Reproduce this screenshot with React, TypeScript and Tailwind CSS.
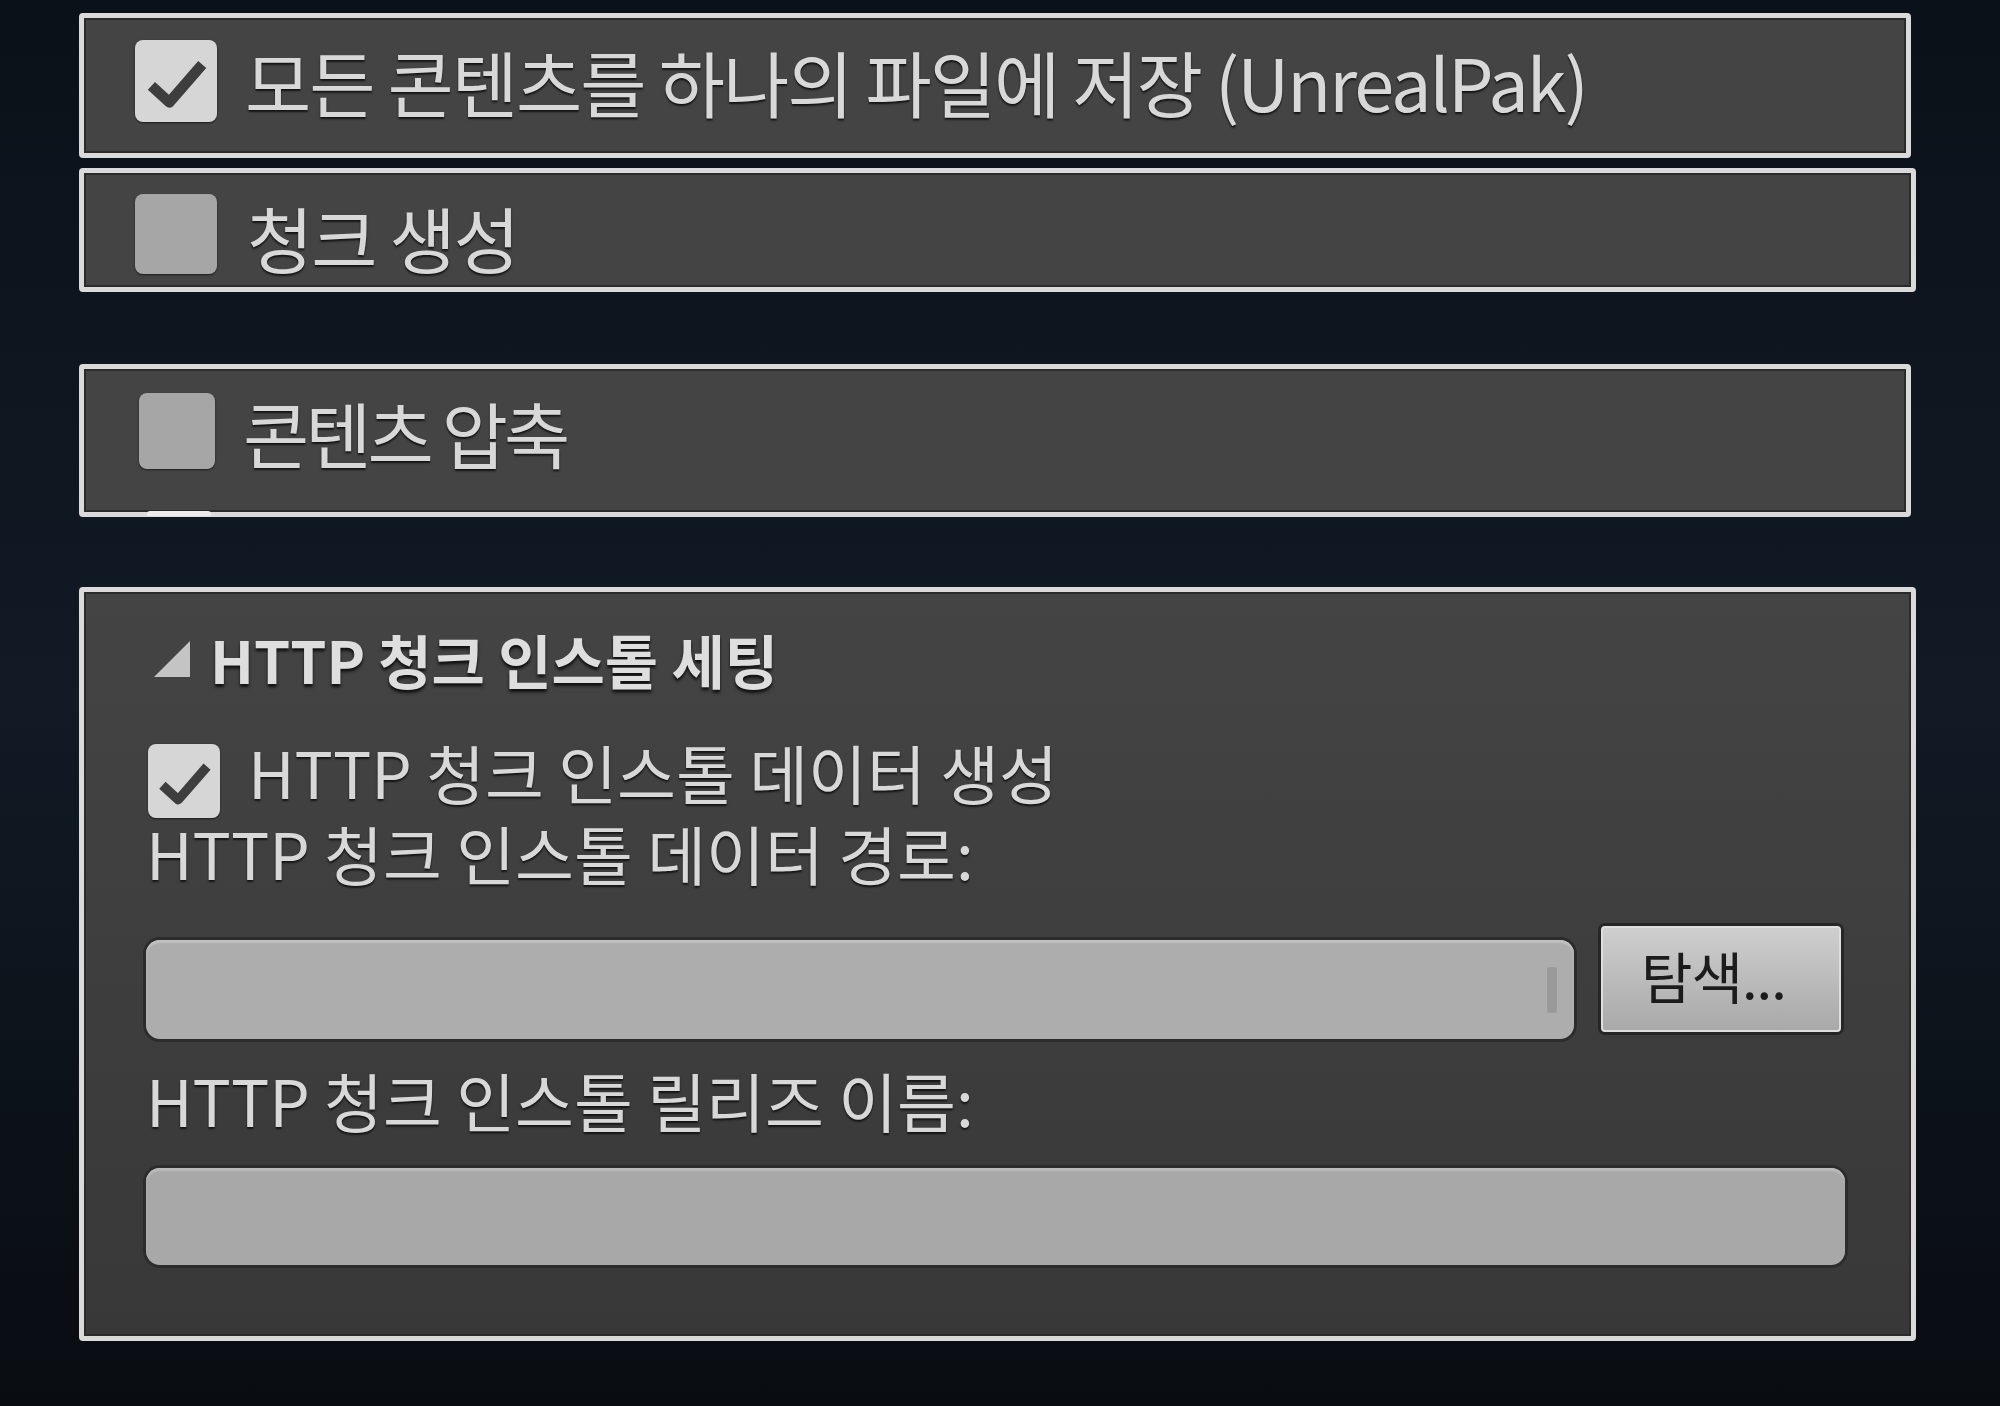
import React from "react";

const font = "font-['Noto_Sans_CJK_KR','Noto_Sans',sans-serif]";
const shadowText = "[text-shadow:0_2px_2px_#141414]";

function Check({ checked, className }: { checked?: boolean; className: string }) {
  return (
    <div
      className={`shrink-0 rounded-[8px] shadow-[0_1px_2px_#1c1c1c] ${
        checked ? "bg-[#d6d6d6]" : "bg-[#a6a6a6]"
      } ${className}`}
    >
      {checked && (
        <svg viewBox="0 0 100 100" className="w-full h-full">
          <polyline
            points="20,56 42,76 82,30"
            fill="none"
            stroke="#3e3e3e"
            strokeWidth="13"
            strokeLinejoin="round"
          />
        </svg>
      )}
    </div>
  );
}

function Panel({
  className,
  children,
}: {
  className: string;
  children: React.ReactNode;
}) {
  return (
    <div
      className={`relative border-[5px] border-[#dadada] rounded-[4px] bg-[#444444] shadow-[inset_0_0_0_2px_#2b2b2b] ${className}`}
    >
      {children}
    </div>
  );
}

export default function App() {
  return (
    <div
      className={`w-[2000px] h-[1406px] overflow-hidden bg-gradient-to-b from-[#0b1119] via-[#111a25] to-[#090c11] pl-[79px] pt-[13px] flex flex-col ${font}`}
    >
      <Panel className="w-[1832px] h-[145px] flex items-start pl-[51px] pt-[22px]">
        <Check checked className="w-[82px] h-[82px]" />
        <span
          className={`ml-[28px] mt-[-4px] text-[72px] leading-[90px] tracking-[-2px] text-[#d8d8d8] ${shadowText}`}
        >
          모든 콘텐츠를 하나의 파일에 저장 (UnrealPak)
        </span>
      </Panel>

      <Panel className="mt-[10px] w-[1837px] h-[124px] flex items-start pl-[51px] pt-[21px]">
        <Check className="w-[82px] h-[80px]" />
        <span
          className={`ml-[30px] mt-[-2px] text-[72px] leading-[90px] tracking-[-2px] text-[#d8d8d8] ${shadowText}`}
        >
          청크 생성
        </span>
      </Panel>

      <Panel className="mt-[72px] w-[1832px] h-[153px] flex items-start pl-[55px] pt-[24px]">
        <Check className="w-[76px] h-[76px]" />
        <span
          className={`ml-[28px] mt-[-6px] text-[72px] leading-[90px] tracking-[-4px] text-[#d8d8d8] ${shadowText}`}
        >
          콘텐츠 압축
        </span>
        <div className="absolute left-[63px] bottom-[-4px] w-[64px] h-[5px] rounded-t-[3px] bg-[#ececec]" />
      </Panel>

      <Panel className="mt-[70px] w-[1837px] h-[754px] bg-gradient-to-b from-[#444444] to-[#383838] pl-[62px] pr-[65px] flex flex-col">
        <div className="mt-[32px] flex items-center h-[70px]">
          <svg viewBox="0 0 40 40" className="ml-[7px] w-[38px] h-[36px] shrink-0">
            <polygon points="0,40 40,0 40,40" fill="#c4c4c4" />
          </svg>
          <span
            className={`ml-[19px] text-[58px] leading-[70px] font-bold tracking-[0px] text-[#dedede] [text-shadow:0_3px_3px_#111]`}
          >
            HTTP 청크 인스톨 세팅
          </span>
        </div>

        <div className="mt-[38px] flex items-center h-[78px]">
          <Check checked className="ml-[2px] mt-[20px] w-[72px] h-[74px]" />
          <span
            className={`ml-[28px] text-[64px] leading-[76px] tracking-[0px] text-[#d8d8d8] ${shadowText}`}
          >
            HTTP 청크 인스톨 데이터 생성
          </span>
        </div>

        <div
          className={`mt-[4px] h-[78px] text-[64px] leading-[76px] tracking-[0px] text-[#d8d8d8] ${shadowText}`}
        >
          HTTP 청크 인스톨 데이터 경로:
        </div>

        <div className="mt-[34px] flex items-start">
          <div className="mt-[14px] w-[1428px] h-[99px] rounded-[14px] bg-[#adadad] shadow-[0_0_0_3px_#2c2c2c,inset_0_3px_2px_#c2c2c2] flex items-center justify-end pr-[17px]">
            <div className="w-[10px] h-[46px] bg-[#9a9a9a] rounded-[2px]" />
          </div>
          <button
            className={`ml-[27px] w-[240px] h-[106px] rounded-[4px] bg-gradient-to-b from-[#cfcfcf] to-[#a9a9a9] border-[2px] border-[#dedede] shadow-[0_0_0_3px_#262626] text-[56px] leading-[60px] tracking-[-1px] text-[#1c1c1c] text-left pl-[38px] pb-[8px]`}
          >
            탐색...
          </button>
        </div>

        <div
          className={`mt-[22px] h-[78px] text-[64px] leading-[76px] tracking-[0px] text-[#d8d8d8] ${shadowText}`}
        >
          HTTP 청크 인스톨 릴리즈 이름:
        </div>

        <div className="mt-[29px] w-[1699px] h-[97px] rounded-[14px] bg-[#a8a8a8] shadow-[0_0_0_3px_#2c2c2c,inset_0_3px_2px_#bbbbbb]" />
      </Panel>
    </div>
  );
}
